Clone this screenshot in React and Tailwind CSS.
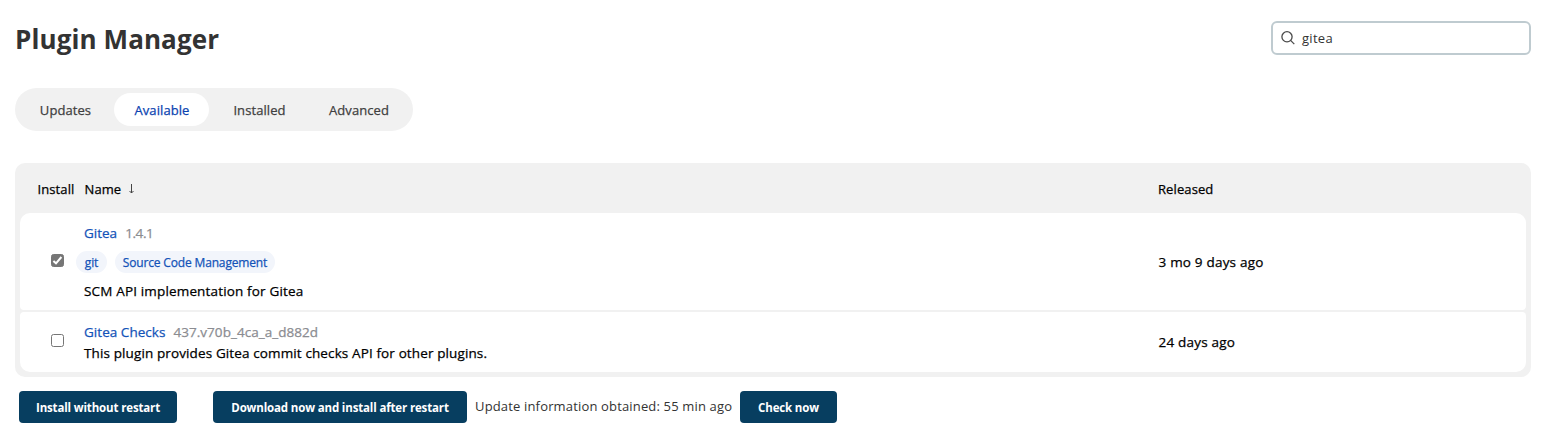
import React from "react";

const tabs = [
  { label: "Updates", size: "w-[90px]" },
  { label: "Available", size: "w-[95px]", active: true },
  { label: "Installed", size: "w-[92px]" },
  { label: "Advanced", size: "w-[99px]" },
];

function Tabs() {
  return (
    <nav className="mt-[33px] flex h-[43px] w-[398px] gap-1 rounded-full bg-[#f1f1f1] p-[5px]">
      {tabs.map((tab) => (
        <a
          key={tab.label}
          className={`flex h-[33px] items-center justify-center rounded-full pt-[2px] pl-px text-[13px] font-medium tracking-[0.08px] [-webkit-text-stroke:0.25px] ${tab.size} ${
            tab.active ? "bg-white text-[#0b43b0]" : "text-[#404040]"
          }`}
        >
          {tab.label}
        </a>
      ))}
    </nav>
  );
}

function SearchBox() {
  return (
    <label className="mt-[21px] flex h-[34px] w-[260px] items-center rounded-[6px] border-2 border-[#bfcbd0] pl-2">
      <svg className="h-[14px] w-[14px] shrink-0" viewBox="0 0 14 14" fill="none" stroke="#4a4a4a" strokeWidth="1.3">
        <circle cx="6" cy="5.8" r="5.1" />
        <path d="M9.6 9.4 13.3 13.1" />
      </svg>
      <span className="ml-[7px] text-[13px] leading-4 tracking-[0.3px] text-[#333]">gitea</span>
    </label>
  );
}

function Checkbox({ checked }) {
  return (
    <span
      className={`flex h-[13px] w-[13px] items-center justify-center rounded-[2.5px] border border-[#767676] ${
        checked ? "bg-[#767676]" : "bg-white"
      }`}
    >
      {checked && (
        <svg className="h-[11px] w-[11px] shrink-0" viewBox="0 0 11 11" fill="none" stroke="white" strokeWidth="2">
          <path d="M1.4 5.9 4 8.3 9.4 2" />
        </svg>
      )}
    </span>
  );
}

function Button({ children, className }) {
  return (
    <button
      className={`flex h-8 shrink-0 items-center justify-center rounded-[4px] bg-[#073e60] pt-[2px] text-[11.5px] font-bold tracking-[-0.15px] whitespace-nowrap text-white ${className}`}
    >
      {children}
    </button>
  );
}

export default function App() {
  return (
    <main className="h-[434px] w-[1547px] overflow-hidden bg-white px-[15px] font-['Open_Sans','Noto_Sans',sans-serif]">
      <header className="flex h-[55px] w-[1516px] justify-between">
        <h1 className="mt-[21px] text-[26px] leading-9 font-bold tracking-[0.1px] text-[#333]">Plugin Manager</h1>
        <SearchBox />
      </header>
      <Tabs />
      <section className="mt-8 w-[1516px] rounded-[10px] bg-[#f1f1f1] px-[5px] pb-[5px] text-[13.5px] leading-4 font-medium tracking-[0.12px] text-black [-webkit-text-stroke:0.25px]">
        <div className="flex h-[50px] items-center pt-[2px] text-[13px] leading-4 tracking-[0.1px]">
          <div className="w-16 pl-[17.5px]">Install</div>
          <div className="flex w-[1074px] items-center pl-[0.5px]">
            Name
            <svg className="ml-[7px] h-[10px] w-[7px]" viewBox="0 0 7 10" fill="none" stroke="#444" strokeWidth="1">
              <path d="M3.5 0V9M1.5 7 3.5 9 5.5 7" />
            </svg>
          </div>
          <div>Released</div>
        </div>
        <div className="flex h-[97px] items-center rounded-t-[10px] rounded-b-[4px] bg-white">
          <div className="w-16 pb-[3px] pl-[31px]">
            <Checkbox checked />
          </div>
          <div className="w-[1074px]">
            <div className="flex gap-2">
              <a className="tracking-[0px] text-[#1353b8]">Gitea</a>
              <span className="tracking-[-0.4px] text-[#8b8c91]">1.4.1</span>
            </div>
            <div className="mt-[10px] -ml-2 flex gap-2 text-[12px] tracking-[-0.16px] text-[#1353b8]">
              <a className="flex h-[22px] w-[31px] items-center justify-center rounded-full bg-[#f2f5fb] pt-[2px]">git</a>
              <a className="flex h-[22px] w-40 items-center justify-center rounded-full bg-[#f2f5fb] pt-[2px] whitespace-nowrap">
                Source Code Management
              </a>
            </div>
            <p className="mt-[10px] tracking-[0.16px]">SCM API implementation for Gitea</p>
          </div>
          <div className="pl-[0.5px] tracking-[0.2px]">3 mo 9 days ago</div>
        </div>
        <div className="mt-[2px] flex h-[60px] items-center rounded-t-[4px] rounded-b-[10px] bg-white">
          <div className="w-16 pb-[3px] pl-[31px]">
            <Checkbox />
          </div>
          <div className="w-[1074px]">
            <div className="flex gap-2">
              <a className="tracking-[0.04px] text-[#1353b8]">Gitea Checks</a>
              <span className="tracking-[0.04px] text-[#8b8c91]">437.v70b_4ca_a_d882d</span>
            </div>
            <p className="mt-[5px]">This plugin provides Gitea commit checks API for other plugins.</p>
          </div>
          <div className="pl-[0.5px] tracking-[0.2px]">24 days ago</div>
        </div>
      </section>
      <footer className="mt-[14px] ml-1 flex items-center">
        <Button className="w-[158px]">Install without restart</Button>
        <Button className="ml-9 w-[254px]">Download now and install after restart</Button>
        <span className="ml-2 w-[257px] pb-[2px] text-[13px] leading-4 tracking-[0.16px] whitespace-nowrap text-[#333]">
          Update information obtained: 55 min ago
        </span>
        <Button className="ml-2 w-[97px]">Check now</Button>
      </footer>
    </main>
  );
}
